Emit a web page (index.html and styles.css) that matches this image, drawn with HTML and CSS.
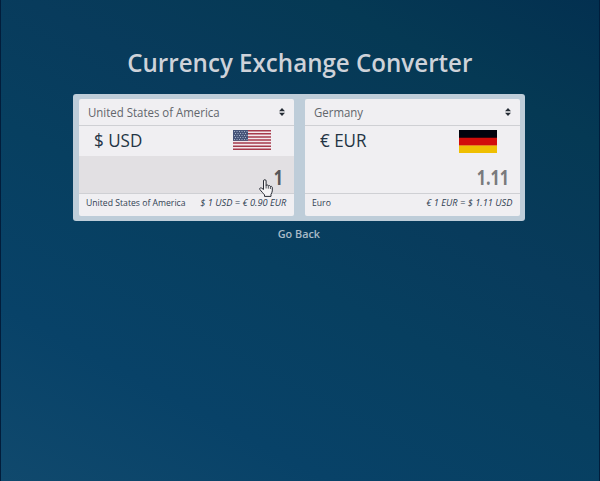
FILE: index.html
```html
<!DOCTYPE html>
<html lang="en">
<head>
<meta charset="utf-8">
<title>Currency Exchange Converter</title>
<link rel="stylesheet" href="styles.css">
</head>
<body>
<main class="page">
  <h1 class="title">Currency Exchange Converter</h1>
  <section class="panel">
    <article class="card">
      <div class="select"><span>United States of America</span>
        <svg class="caret" viewBox="0 0 6 8"><path d="M3 0 6 3.300H0zM3 8 0 4.700h6z"/></svg>
      </div>
      <div class="currency"><span class="code">$ USD</span>
        <svg class="flag flag-us" viewBox="0 0 38 20" preserveAspectRatio="none">
          <path fill="#f3e9ed" d="M0 0h38v20H0z"/>
          <path stroke="#a63a4c" stroke-width="1.54" d="M0 .77h38M0 3.85h38M0 6.92h38M0 10h38M0 13.08h38M0 16.15h38M0 19.23h38"/>
          <path fill="#465479" d="M0 0h15v10.8H0z"/>
          <path stroke="#aebbd0" stroke-width=".9" stroke-dasharray="1 1.5" d="M1 1.5h13.500M2 3.500h12.500M1 5.500h13.500M2 7.500h12.500M1 9.500h13.500"/>
        </svg>
      </div>
      <div class="amount active"><span>1</span>
        <svg class="pointer" viewBox="0 0 14 18"><path fill="#f4f3f5" stroke="#292c35" stroke-linejoin="round" d="M4.500 10.500V2a1.300 1.300 0 0 1 2.600 0v4.500c.6-.9 2-.7 2.200.4.700-.7 1.900-.4 2.100.6.800-.4 1.900 0 1.900 1.100v3.300c0 1.600-.9 2.200-1.300 3.400v2.100H5.500v-1.500C4.500 14.500 2.200 12.300.9 10.500c-.8-1.400.8-2.200 1.800-1.300z"/><path fill="none" stroke="#292c35" stroke-width=".8" d="M7.100 6v3.500M9.300 7v2.700M11.400 7.600v2.400"/></svg>
      </div>
      <div class="foot"><span>United States of America</span><em>$ 1 USD = € 0.90 EUR</em></div>
    </article>
    <article class="card">
      <div class="select"><span>Germany</span>
        <svg class="caret" viewBox="0 0 6 8"><path d="M3 0 6 3.300H0zM3 8 0 4.700h6z"/></svg>
      </div>
      <div class="currency"><span class="code">€ EUR</span>
        <svg class="flag flag-de" viewBox="0 0 38 23" preserveAspectRatio="none"><path fill="#02030d" d="M0 0h38v8H0z"/><path fill="#d20d0b" d="M0 7.700h38v8H0z"/><path fill="#efbf02" d="M0 15.400h38V23H0z"/></svg>
      </div>
      <div class="amount"><span>1.11</span></div>
      <div class="foot"><span>Euro</span><em>€ 1 EUR = $ 1.11 USD</em></div>
    </article>
  </section>
  <a class="back">Go Back</a>
</main>
</body>
</html>
```
FILE: styles.css
```css
* { box-sizing: border-box; }
body {
  margin: 0;
  font-family: "Open Sans", "Noto Sans", sans-serif;
}
.page {
  height: 481px;
  padding: 46px 2px 0 0;
  display: flex;
  flex-direction: column;
  align-items: center;
  border: solid #021d3b;
  border-width: 0 1px;
  background: linear-gradient(28deg, #10496d 0%, #084268 22%, #073f60 45%, #083b5c 62%, #053954 82%, #033050 100%);
}
.title {
  margin: 0 0 0 1px;
  height: 48px;
  font-size: 25px;
  font-weight: 600;
  line-height: 33px;
  white-space: nowrap;
  color: #ced2d9;
  transform: scaleX(.965);
}
.panel {
  width: 452px;
  height: 127px;
  padding: 5px 5px 5px 6px;
  display: grid;
  grid-template-columns: 215px 215px;
  gap: 11px;
  border-radius: 3px;
  background: #becdd9;
}
.card {
  display: grid;
  grid-template-rows: 27px 30px 38px 22px;
  border-radius: 2px;
  background: #f0eff2;
}
.select {
  display: flex;
  justify-content: space-between;
  align-items: center;
  padding: 0 9px;
  border-bottom: 1px solid #cfd0d4;
  font-size: 12.3px;
  color: #62666c;
}
.select span, .code, .foot span {
  transform: scaleX(.93);
  transform-origin: left;
}
.caret { width: 6px; height: 8px; fill: #252c35; }
.currency {
  display: flex;
  justify-content: space-between;
  padding: 0 23px 0 15px;
}
.currency .code {
  font-size: 18.5px;
  line-height: 28px;
  color: #233444;
  transform: scaleX(.92);
}
.flag { width: 38px; margin-top: 4px; }
.flag-us { height: 20px; }
.flag-de { height: 23px; }
.amount {
  position: relative;
  padding-right: 11px;
  border-bottom: 1px solid #cfd0d4;
  font-size: 21px;
  font-weight: 700;
  line-height: 42px;
  text-align: right;
  color: #797a7d;
}
.amount span {
  display: inline-block;
  transform: scaleX(.77);
  transform-origin: right;
}
.active { background: #e2e0e3; color: #57575a; }
.pointer {
  position: absolute;
  left: 180px;
  top: 23px;
  width: 14px;
  height: 18px;
}
.foot {
  display: flex;
  justify-content: space-between;
  padding: 0 8px 0 7px;
  font-size: 9.5px;
  line-height: 18px;
  white-space: nowrap;
  color: #304153;
}
.foot span { transform: scaleX(.91); }
.foot em {
  transform: scaleX(.975);
  transform-origin: right;
}
.back {
  margin-top: 4px;
  font-size: 11.2px;
  font-weight: 600;
  line-height: 17px;
  color: #a9bbc8;
  transform: scaleX(.97);
}
```
